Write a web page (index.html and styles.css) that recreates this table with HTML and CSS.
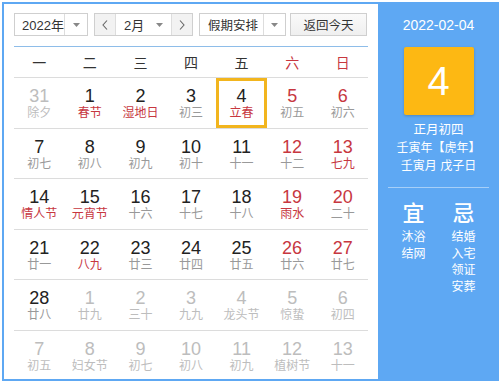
FILE: index.html
```html
<!DOCTYPE html>
<html lang="zh">
<head>
<meta charset="utf-8">
<title>万年历</title>
<link rel="stylesheet" href="styles.css">
</head>
<body>
<div class="cal">
  <div class="main">
    <div class="toolbar">
      <div class="ctl year">
        <span class="val">2022年</span>
        <span class="drop"><svg width="7" height="4" viewBox="0 0 7 4"><path d="M0 0h7L3.5 4z" fill="#888"/></svg></span>
      </div>
      <div class="ctl month">
        <span class="nav"><svg width="6" height="10" viewBox="0 0 6 10"><path d="M5 0.5L1 5l4 4.5" fill="none" stroke="#666" stroke-width="1.1"/></svg></span>
        <span class="val">2月</span>
        <span class="drop"><svg width="7" height="4" viewBox="0 0 7 4"><path d="M0 0h7L3.5 4z" fill="#888"/></svg></span>
        <span class="nav"><svg width="6" height="10" viewBox="0 0 6 10"><path d="M1 0.5L5 5l-4 4.5" fill="none" stroke="#666" stroke-width="1.1"/></svg></span>
      </div>
      <div class="ctl holiday">
        <span class="val">假期安排</span>
        <span class="drop"><svg width="7" height="4" viewBox="0 0 7 4"><path d="M0 0h7L3.5 4z" fill="#888"/></svg></span>
      </div>
      <div class="ctl today-btn">返回今天</div>
    </div>
    <div class="weekdays">
      <span>一</span><span>二</span><span>三</span><span>四</span><span>五</span><span class="we">六</span><span class="we">日</span>
    </div>
    <div class="week">
      <div class="d other"><b>31</b><i>除夕</i></div>
      <div class="d"><b>1</b><i class="fes">春节</i></div>
      <div class="d"><b>2</b><i class="fes">湿地日</i></div>
      <div class="d"><b>3</b><i>初三</i></div>
      <div class="d cur"><b>4</b><i class="fes">立春</i></div>
      <div class="d we"><b>5</b><i>初五</i></div>
      <div class="d we"><b>6</b><i>初六</i></div>
    </div>
    <div class="week">
      <div class="d"><b>7</b><i>初七</i></div>
      <div class="d"><b>8</b><i>初八</i></div>
      <div class="d"><b>9</b><i>初九</i></div>
      <div class="d"><b>10</b><i>初十</i></div>
      <div class="d"><b>11</b><i>十一</i></div>
      <div class="d we"><b>12</b><i>十二</i></div>
      <div class="d we"><b>13</b><i class="fes">七九</i></div>
    </div>
    <div class="week">
      <div class="d"><b>14</b><i class="fes">情人节</i></div>
      <div class="d"><b>15</b><i class="fes">元宵节</i></div>
      <div class="d"><b>16</b><i>十六</i></div>
      <div class="d"><b>17</b><i>十七</i></div>
      <div class="d"><b>18</b><i>十八</i></div>
      <div class="d we"><b>19</b><i class="fes">雨水</i></div>
      <div class="d we"><b>20</b><i>二十</i></div>
    </div>
    <div class="week">
      <div class="d"><b>21</b><i>廿一</i></div>
      <div class="d"><b>22</b><i class="fes">八九</i></div>
      <div class="d"><b>23</b><i>廿三</i></div>
      <div class="d"><b>24</b><i>廿四</i></div>
      <div class="d"><b>25</b><i>廿五</i></div>
      <div class="d we"><b>26</b><i>廿六</i></div>
      <div class="d we"><b>27</b><i>廿七</i></div>
    </div>
    <div class="week">
      <div class="d"><b>28</b><i>廿八</i></div>
      <div class="d other"><b>1</b><i>廿九</i></div>
      <div class="d other"><b>2</b><i>三十</i></div>
      <div class="d other"><b>3</b><i>九九</i></div>
      <div class="d other"><b>4</b><i>龙头节</i></div>
      <div class="d other"><b>5</b><i>惊蛰</i></div>
      <div class="d other"><b>6</b><i>初四</i></div>
    </div>
    <div class="week">
      <div class="d other"><b>7</b><i>初五</i></div>
      <div class="d other"><b>8</b><i>妇女节</i></div>
      <div class="d other"><b>9</b><i>初七</i></div>
      <div class="d other"><b>10</b><i>初八</i></div>
      <div class="d other"><b>11</b><i>初九</i></div>
      <div class="d other"><b>12</b><i>植树节</i></div>
      <div class="d other"><b>13</b><i>十一</i></div>
    </div>
  </div>
  <div class="side">
    <div class="date">2022-02-04</div>
    <div class="bigday">4</div>
    <div class="lunar">
      <div class="lunar-md">正月初四</div>
      <div>壬寅年【虎年】</div>
      <div>壬寅月 戊子日</div>
    </div>
    <div class="sep"></div>
    <div class="yiji">
      <div class="col">
        <div class="head">宜</div>
        <div>沐浴</div>
        <div>结网</div>
      </div>
      <div class="col">
        <div class="head">忌</div>
        <div>结婚</div>
        <div>入宅</div>
        <div>领证</div>
        <div>安葬</div>
      </div>
    </div>
  </div>
</div>
</body>
</html>
```

FILE: styles.css
```css
* { box-sizing: border-box; }
html, body { margin: 0; padding: 0; background: #fff; }
body {
  font-family: "Liberation Sans", "Noto Sans CJK SC", sans-serif;
  color: #222;
}
.cal {
  margin: 2px 0 0 2px;
  width: 497px;
  height: 379px;
  border: 2px solid #5ea8f3;
  border-right: 0;
  display: flex;
  background: #fff;
  overflow: hidden;
}
.main {
  width: 374px;
  padding: 9px 6px 0 10px;
  overflow: hidden;
}
.toolbar {
  display: flex;
  height: 23px;
  gap: 6px;
  margin-bottom: 10px;
}
.ctl {
  height: 23px;
  border: 1px solid #cfcfcf;
  background: #fff;
  display: flex;
  align-items: center;
  font-size: 13px;
  color: #333;
  white-space: nowrap;
  flex: none;
}
.ctl .val { flex: 1; padding-left: 8px; white-space: nowrap; }
.ctl .drop {
  flex: none;
  height: 100%;
  display: flex;
  align-items: center;
  justify-content: center;
}
.year { width: 74px; }
.year .val { padding-left: 7px; }
.year .drop { width: 23px; border-left: 1px solid #ddd; }
.month { width: 99px; }
.month .val { padding-left: 8px; }
.month .drop { width: 24px; }
.month .nav {
  flex: none;
  width: 21px;
  height: 100%;
  background: #f2f2f2;
  display: flex;
  align-items: center;
  justify-content: center;
}
.month .nav:first-child { border-right: 1px solid #ddd; }
.month .nav:last-child { border-left: 1px solid #ddd; }
.holiday { width: 87px; }
.holiday .val { padding-left: 8px; font-size: 12.5px; }
.holiday .drop { width: 22px; border-left: 1px solid #ddd; }
.today-btn {
  width: 77px;
  margin-left: -2px;
  justify-content: center;
  font-size: 12.5px;
  background: linear-gradient(#fafafa, #efefef);
}
.weekdays {
  width: 354px;
  display: grid;
  grid-template-columns: repeat(7, 1fr);
  border-top: 1px solid #8ebde9;
  height: 31px;
  align-items: center;
  text-align: center;
  font-size: 14px;
  color: #333;
}
.weekdays .we { color: #c7373f; }
.week {
  width: 354px;
  height: 50.6px;
  display: grid;
  grid-template-columns: repeat(7, 1fr);
  border-top: 1px solid #dcdcdc;
}
.d {
  text-align: center;
  padding-top: 8px;
}
.d b {
  display: block;
  font-weight: normal;
  font-size: 18px;
  line-height: 20px;
  color: #222;
}
.d i {
  display: block;
  font-style: normal;
  font-size: 12px;
  line-height: 15px;
  color: #999;
}
.d.we b { color: #c7373f; }
.d i.fes { color: #c7373f; }
.d.other b, .d.other i { color: #bdbdbd; }
.d.cur { box-shadow: inset 0 0 0 3px #f2b51e; }
.side {
  flex: 1;
  background: #5ea8f3;
  color: #fff;
  display: flex;
  flex-direction: column;
  align-items: center;
}
.date {
  margin-top: 12px;
  font-size: 14px;
  line-height: 18px;
}
.bigday {
  margin-top: 13px;
  width: 70px;
  height: 68px;
  background: #fdb813;
  border-radius: 2px;
  box-shadow: 0 1px 3px rgba(0,0,0,0.2);
  font-size: 40px;
  line-height: 68px;
  text-align: center;
}
.lunar {
  margin-top: 6px;
  font-size: 12px;
  line-height: 18px;
  text-align: center;
}
.lunar-md { font-size: 12.5px; }
.sep {
  margin-top: 12px;
  width: 101px;
  height: 1px;
  background: rgba(255,255,255,0.45);
}
.yiji {
  display: flex;
  width: 100px;
  margin-top: 13px;
}
.col {
  flex: 1;
  text-align: center;
  font-size: 12px;
  line-height: 16.7px;
}
.col .head {
  font-size: 22px;
  line-height: 26px;
  font-weight: 500;
  margin-bottom: 2px;
}
```
